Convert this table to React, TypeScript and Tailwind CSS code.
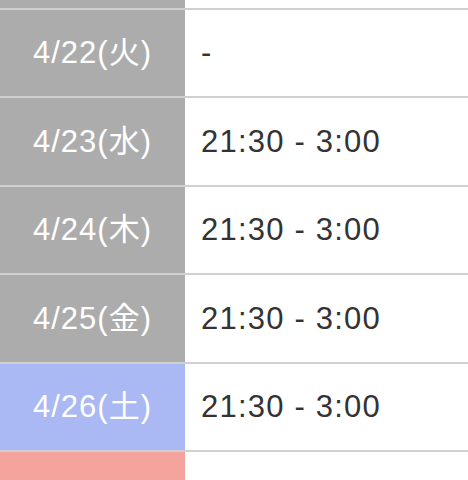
import React from "react";

const rows = [
  { date: "4/22(火)", time: "-", bg: "bg-[#acacac]" },
  { date: "4/23(水)", time: "21:30 - 3:00", bg: "bg-[#acacac]" },
  { date: "4/24(木)", time: "21:30 - 3:00", bg: "bg-[#acacac]" },
  { date: "4/25(金)", time: "21:30 - 3:00", bg: "bg-[#acacac]" },
  { date: "4/26(土)", time: "21:30 - 3:00", bg: "bg-[#aab8f3]" },
];

export default function App() {
  return (
    <div
      className="w-[468px] h-[480px] overflow-hidden bg-white flex flex-col"
      style={{ fontFamily: '"Liberation Sans", "Noto Sans CJK JP", sans-serif' }}
    >
      <div className="flex h-[7.5px] shrink-0">
        <div className="w-[185px] bg-[#acacac]" />
        <div className="flex-1" />
      </div>
      {rows.map((r) => (
        <div key={r.date} className="flex h-[88.5px] shrink-0 border-t-2 border-[#d0d0d0]">
          <div className={`w-[185px] ${r.bg} flex items-center justify-center text-white text-[31px] tracking-[1px] leading-none`}>
            {r.date}
          </div>
          <div className="flex-1 flex items-center pl-[16px] text-[#333333] text-[31px] tracking-[1.2px] leading-none">
            {r.time}
          </div>
        </div>
      ))}
      <div className="flex h-[40px] shrink-0 border-t-2 border-[#d0d0d0]">
        <div className="w-[185px] bg-[#f4a49c]" />
        <div className="flex-1" />
      </div>
    </div>
  );
}
